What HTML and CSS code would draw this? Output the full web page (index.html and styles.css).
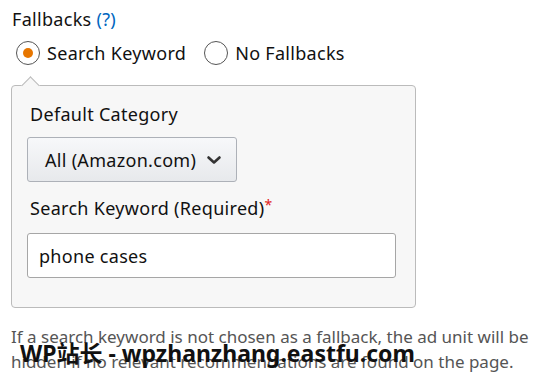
FILE: index.html
```html
<!DOCTYPE html>
<html>
<head>
<meta charset="utf-8">
<link rel="stylesheet" href="styles.css">
</head>
<body>
<div class="page">
  <div class="title">Fallbacks <span class="help">(?)</span></div>
  <div class="radios">
    <label class="radio"><span class="circle checked"><span class="dot"></span></span>Search Keyword</label>
    <label class="radio"><span class="circle"></span>No Fallbacks</label>
  </div>
  <div class="panel">
    <div class="notch"></div>
    <div class="label">Default Category</div>
    <div class="select">All (Amazon.com)<svg class="chev" width="16" height="10" viewBox="0 0 16 10"><path d="M2.5 2.5 L8 7.5 L13.5 2.5" fill="none" stroke="#333" stroke-width="2.6" stroke-linecap="round" stroke-linejoin="round"/></svg></div>
    <div class="label second">Search Keyword (Required)<span class="req">*</span></div>
    <div class="input">phone cases</div>
  </div>
  <p class="desc">If a search keyword is not chosen as a fallback, the ad unit will be hidden if no relevant recommendations are found on the page.</p>
  <div class="watermark">WP站长 - wpzhanzhang.eastfu.com</div>
</div>
</body>
</html>
```
FILE: styles.css
```css
html, body {
  margin: 0;
  padding: 0;
  background: #fff;
}
body {
  font-family: "Noto Sans", "Noto Sans CJK SC", sans-serif;
  font-size: 18px;
  letter-spacing: 0.3px;
  color: #111;
}
.page {
  position: relative;
  padding: 4px 0 0 11px;
  width: 530px;
}
.title {
  padding-left: 1px;
  line-height: 30px;
}
.help {
  color: #0066c0;
}
.radios {
  display: flex;
  gap: 18px;
  margin-top: 6px;
  padding-left: 5px;
}
.radio {
  display: flex;
  align-items: center;
  gap: 7px;
  line-height: 26px;
}
.circle {
  width: 22px;
  height: 22px;
  border: 1.5px solid #555;
  border-radius: 50%;
  background: #fff;
  display: flex;
  align-items: center;
  justify-content: center;
}
.dot {
  width: 10px;
  height: 10px;
  border-radius: 50%;
  background: #e77600;
}
.panel {
  position: relative;
  margin-top: 19px;
  width: 405px;
  box-sizing: border-box;
  border: 1px solid #bbb;
  border-radius: 4px;
  background: #f7f7f7;
  padding: 15px 19px 29px 15px;
}
.notch {
  position: absolute;
  left: 12px;
  top: -7px;
  width: 12px;
  height: 12px;
  background: #f7f7f7;
  border-left: 1px solid #bbb;
  border-top: 1px solid #bbb;
  transform: rotate(45deg);
}
.label {
  padding-left: 3px;
  line-height: 26px;
}
.label.second {
  margin-top: 13px;
}
.req {
  color: #e02020;
  font-size: 14px;
  vertical-align: top;
  line-height: 20px;
}
.select {
  margin-top: 10px;
  width: 210px;
  height: 45px;
  box-sizing: border-box;
  border: 1px solid #adb1b8;
  border-radius: 3px;
  background: linear-gradient(#f7f8fa, #e7e9ec);
  display: flex;
  align-items: center;
  padding-left: 17px;
  gap: 10px;
}
.input {
  margin-top: 12px;
  height: 45px;
  box-sizing: border-box;
  border: 1px solid #a6a6a6;
  border-radius: 3px;
  background: #fff;
  display: flex;
  align-items: center;
  padding-left: 11px;
}
.desc {
  margin: 16px 0 0 0;
  color: #555;
  font-size: 17px;
  letter-spacing: 0;
  line-height: 25px;
  width: 530px;
}
.watermark {
  position: absolute;
  left: 20px;
  top: 338px;
  font-size: 23px;
  font-weight: bold;
  letter-spacing: 0;
  color: #111;
  line-height: 30px;
}
```
